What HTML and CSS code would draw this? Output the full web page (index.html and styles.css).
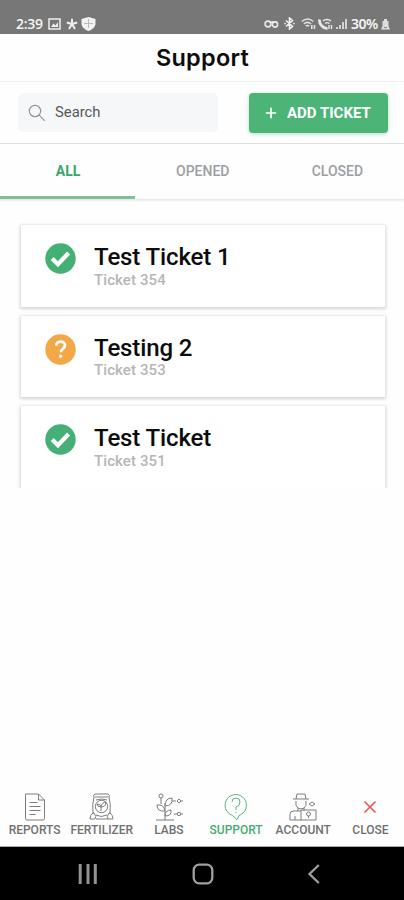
FILE: index.html
```html
<!DOCTYPE html>
<html lang="en">
<head>
<meta charset="utf-8">
<title>Support</title>
<link rel="stylesheet" href="styles.css">
</head>
<body>
<div class="status">
  <div class="status-left">
    <span class="clock">2:39</span>
    <svg width="13" height="12" viewBox="0 0 13 12"><path d="M1 1h11v10H1z" fill="none" stroke="#eee" stroke-width="1.500"/><path d="M3 9l2.500-3.500 2 2L10 4v5z" fill="#eee"/></svg>
    <svg width="12" height="12" viewBox="0 0 12 12"><path d="M6 6V.8M6 6L.8 4.500M6 6l5.200-1.500M6 6L3 11M6 6l3 5" stroke="#eee" stroke-width="2" fill="none"/></svg>
    <svg class="shield" width="15" height="14" viewBox="0 0 15 14"><path d="M7.500 0L14.500 2v4c0 4-3 6.500-7 8C3.500 12.500.5 10 .5 6V2z" fill="#f2f2f2"/><path d="M7.500 2v9M3 6.500h9" stroke="#bbb"/></svg>
  </div>
  <div class="status-right">
    <svg width="15" height="12" viewBox="0 0 15 12" fill="none" stroke="#e8e8e8" stroke-width="1.700"><circle cx="4" cy="6" r="2.900"/><circle cx="11" cy="6.500" r="2.600"/><path d="M5 4h8"/></svg>
    <svg class="bt" width="11" height="13" viewBox="0 0 11 13" fill="none" stroke="#f0f0f0" stroke-width="1.600"><path d="M2 3.500l6.500 6L5.500 12V1l3 2.500-6.500 6M.3 6.500h1.500M9.200 6.500h1.500"/></svg>
    <svg class="wifi" width="15" height="12" viewBox="0 0 15 12" fill="none" stroke="#e2e2e2" stroke-width="1.600"><path d="M.8 3.500c3.500-3 8-3 11.500 0M2.800 6c2.300-2 5-2 7.300 0M4.800 8.200c1.200-1 2.300-1 3.400 0M10.800 7v4M13.500 7v4"/></svg>
    <svg width="15" height="12" viewBox="0 0 15 12" fill="none" stroke="#e8e8e8"><path d="M1.500 1.500C1 6 5 10.500 9.500 10.500" stroke-width="2.800"/><path d="M5 3c2-2 6-2 8 0M7 5.500c1.500-1.200 3-1.200 4.500 0M11 7v4M13.500 7v4" stroke-width="1.400"/></svg>
    <svg width="12" height="12" viewBox="0 0 12 12" fill="#d2d2d2"><path d="M1 9h2v2H1zM4 7h2v4H4zM7 4h2v7H7zM10 1h2v10h-2z"/></svg>
    <span class="battery">30%</span>
    <svg width="9" height="12" viewBox="0 0 9 12"><path d="M3 1h3v2h1.500v5L9 11.500H0L1.500 8V3H3z" fill="#dedede"/><path d="M3 9.500h3" stroke="#888"/></svg>
  </div>
</div>
<header class="title">Support</header>
<div class="tools">
  <div class="search">
    <svg width="18" height="18" viewBox="0 0 18 18" fill="none" stroke="#92959a" stroke-width="1.200"><circle cx="7" cy="7" r="5.700"/><path d="M11.200 11.200l5.600 5.600"/></svg>
    <span>Search</span>
  </div>
  <div class="add">
    <svg width="12" height="12" viewBox="0 0 12 12"><path d="M6 .8v10.400M.8 6h10.400" stroke="#fff" stroke-width="1.700"/></svg>
    <span>ADD TICKET</span>
  </div>
</div>
<nav class="tabs">
  <div class="tab active">ALL</div>
  <div class="tab">OPENED</div>
  <div class="tab">CLOSED</div>
</nav>
<main class="list">
  <div class="card">
    <svg class="badge" viewBox="0 0 31 31"><circle cx="15.500" cy="15.500" r="15.200" fill="#45b075"/><path d="M7.200 15.500l5.700 5.700L23.600 10" fill="none" stroke="#fff" stroke-width="4.200"/></svg>
    <div><div class="name">Test Ticket 1</div><div class="num">Ticket 354</div></div>
  </div>
  <div class="card">
    <svg class="badge" viewBox="0 0 31 31"><circle cx="15.500" cy="15.500" r="15.200" fill="#f2a846"/><path d="M11.200 11.600c.2-5.200 8.800-5.300 8.800-.3 0 3.400-4.200 3.400-4.200 7" fill="none" stroke="#fff" stroke-width="2.700"/><circle cx="15.700" cy="22.200" r="1.700" fill="#fff"/></svg>
    <div><div class="name">Testing 2</div><div class="num">Ticket 353</div></div>
  </div>
  <div class="card">
    <svg class="badge" viewBox="0 0 31 31"><circle cx="15.500" cy="15.500" r="15.200" fill="#45b075"/><path d="M7.200 15.500l5.700 5.700L23.600 10" fill="none" stroke="#fff" stroke-width="4.200"/></svg>
    <div><div class="name">Test Ticket</div><div class="num">Ticket 351</div></div>
  </div>
</main>
<nav class="bottom">
  <div class="item">
    <svg viewBox="0 0 28 28"><path d="M4.500 1h13l6 6v18.500q0 1.500-1.500 1.500H6q-1.500 0-1.500-1.500zM17.500 1v6h6M8.500 9.500h8M8.500 13.500h11M8.500 17.500h11M8.500 21.500h6"/></svg>
    <span>REPORTS</span>
  </div>
  <div class="item">
    <svg viewBox="0 0 28 28"><path d="M7 1h13q2 1 1 3 2 7 1 17M7 1q-2 1-1 3-2 7-1 17M7 4h13M8 7q6-2 11 0M8 26h12M5 20q-3 2-3 6h5q2-2-1-6zM22 20q3 2 3 6h-5q-2-2 1-6zM8 22q5 3 11 0"/><circle cx="13.500" cy="13.500" r="6.200"/><path d="M13 18v-4q-4 0-4-3 4 0 4 3 1-5 5-5 0 5-5 5"/></svg>
    <span>FERTILIZER</span>
  </div>
  <div class="item">
    <svg viewBox="0 0 28 28"><path d="M1 27h18M10 27V10M10 23q0-6 6-6 1 6-6 6M10 13q0-8 7-8 1 8-7 8M10 18q-8 1-8-6 7-1 8 6M6 11V5M17 8h4M19 21h3M22 8l2-2 2 2-2 2zM26 8h2M26 21h2"/><circle cx="6" cy="3" r="2"/><circle cx="24" cy="21" r="1.700"/></svg>
    <span>LABS</span>
  </div>
  <div class="item green">
    <svg viewBox="0 0 28 28"><path d="M10.500 22.400A10.700 10.700 0 1 1 17 22.400L15 26.800l-4.500-4.400M10 9q0-4 4-4t4 4-4 5v3M14 19v1"/></svg>
    <span>SUPPORT</span>
  </div>
  <div class="item">
    <svg viewBox="0 0 28 28"><path d="M7 6l1-5h8l1 5M4 6h16M7 8q-1 5 2 7 3 2 6 0 3-2 2-7M9 15v3M15 15v3M1 27v-6q0-3 4-3h7M1 27h11M6 27v-4M12 17h15v10H12zM20 11l3-2 3 2-3 2z"/><circle cx="19.500" cy="21" r="2"/><path d="M19.500 23v2"/></svg>
    <span>ACCOUNT</span>
  </div>
  <div class="item">
    <svg class="close" viewBox="0 0 28 28"><path d="M8.500 8.500l11 11M19.500 8.500l-11 11"/></svg>
    <span>CLOSE</span>
  </div>
</nav>
<footer class="system">
  <svg width="20" height="20" viewBox="0 0 20 20"><path d="M2.200 0v20M10 0v20M17.300 0v20" stroke="#929292" stroke-width="3"/></svg>
  <svg width="22" height="22" viewBox="0 0 22 22"><rect x="1.700" y="1.700" width="18.600" height="18.600" rx="5.500" fill="none" stroke="#a0a0a0" stroke-width="2.300"/></svg>
  <svg width="14" height="20" viewBox="0 0 14 20"><path d="M11.800 1L2.500 10l9.300 9" fill="none" stroke="#a0a0a0" stroke-width="2.300"/></svg>
</footer>
</body>
</html>
```
FILE: styles.css
```css
* { box-sizing: border-box; }
body {
  margin: 0;
  width: 404px;
  height: 900px;
  display: flex;
  flex-direction: column;
  overflow: hidden;
  background: #fefefe;
  font-family: Roboto, sans-serif;
}
svg { display: block; flex: none; }
span, .tab, .name, .num { white-space: nowrap; }
.status {
  height: 33.500px;
  flex: none;
  background: #777;
  color: #f5f5f5;
  display: flex;
  justify-content: space-between;
  padding: 14px 14px 0 16px;
}
.status-left, .status-right { display: flex; align-items: center; height: 19px; }
.status-left { gap: 5px; }
.status-right { gap: 2px; }
.clock { font: 600 14px "Open Sans", sans-serif; letter-spacing: -0.300px; width: 27px; }
.shield { margin-left: -2px; }
.bt { margin: 0 4px 0 3px; }
.battery { font: 600 14px "Noto Sans", sans-serif; letter-spacing: -0.500px; margin: 0 1px 0 2px; width: 27px; }
.title {
  height: 48.500px;
  flex: none;
  border-bottom: 1px solid #f1f1f1;
  font: 600 23.500px/47px Inter, sans-serif;
  letter-spacing: 0.250px;
  color: #0c0c0c;
  text-align: center;
  padding-left: 1px;
}
.tools {
  height: 62px;
  flex: none;
  display: flex;
  justify-content: space-between;
  align-items: flex-start;
  padding: 11px 16px 0 18px;
  border-bottom: 1.500px solid #dfdfdf;
}
.search {
  width: 200px;
  height: 39px;
  border-radius: 5px;
  background: #f6f7f9;
  display: flex;
  align-items: center;
  gap: 9px;
  padding: 0 0 2px 10px;
  font-size: 14.800px;
  color: #55585c;
}
.search svg { margin-top: 2px; }
.add {
  width: 139px;
  height: 40px;
  border-radius: 4px;
  background: #4bb476;
  box-shadow: 0 1px 4px #b9d9c6;
  display: flex;
  align-items: center;
  gap: 10px;
  padding-left: 16px;
  color: #fff;
  font-size: 15px;
  font-weight: 700;
}
.tabs {
  height: 55px;
  flex: none;
  display: flex;
  box-shadow: 0 1px 3px #dcdcdc;
}
.tab {
  flex: 1;
  text-align: center;
  padding-left: 1.500px;
  font-size: 14px;
  font-weight: 500;
  line-height: 55px;
  color: #9b9fa2;
}
.tab.active { color: #36a66b; font-weight: 700; border-bottom: 3px solid #80bf9a; }
.list {
  height: 289px;
  flex: none;
  overflow: hidden;
  padding: 26px 19.500px 0 21px;
}
.card {
  height: 81.500px;
  margin-bottom: 9px;
  background: #fff;
  box-shadow: 0 1px 3px 1px #d6d6d6;
  display: flex;
  gap: 18px;
  padding: 18px 0 0 24px;
}
.badge { width: 31px; height: 31px; }
.name { font-size: 24px; font-weight: 500; letter-spacing: -0.120px; line-height: 28.500px; color: #0c0c0c; }
.num { font-size: 15px; font-weight: 500; letter-spacing: 0.100px; line-height: 17px; color: #b6b6b6; }
.bottom {
  margin-top: auto;
  height: 59px;
  flex: none;
  display: flex;
  padding-left: 1px;
  border-bottom: 1px solid #aaa;
}
.item {
  width: 67.300px;
  display: flex;
  flex-direction: column;
  align-items: center;
  padding-top: 5px;
  font-size: 12px;
  font-weight: 500;
  line-height: 17px;
  color: #707070;
}
.item svg { width: 28px; height: 28px; margin-bottom: 1px; fill: none; stroke: #7d7d7d; stroke-width: 1; }
.item.green { color: #48ab75; }
.item.green svg { stroke: #59b584; }
.item svg.close { stroke: #ee5252; stroke-width: 1.600; }
.system {
  height: 53px;
  flex: none;
  background: #000;
  display: flex;
  align-items: center;
  justify-content: space-between;
  padding: 0 83px 0 78px;
}
```
